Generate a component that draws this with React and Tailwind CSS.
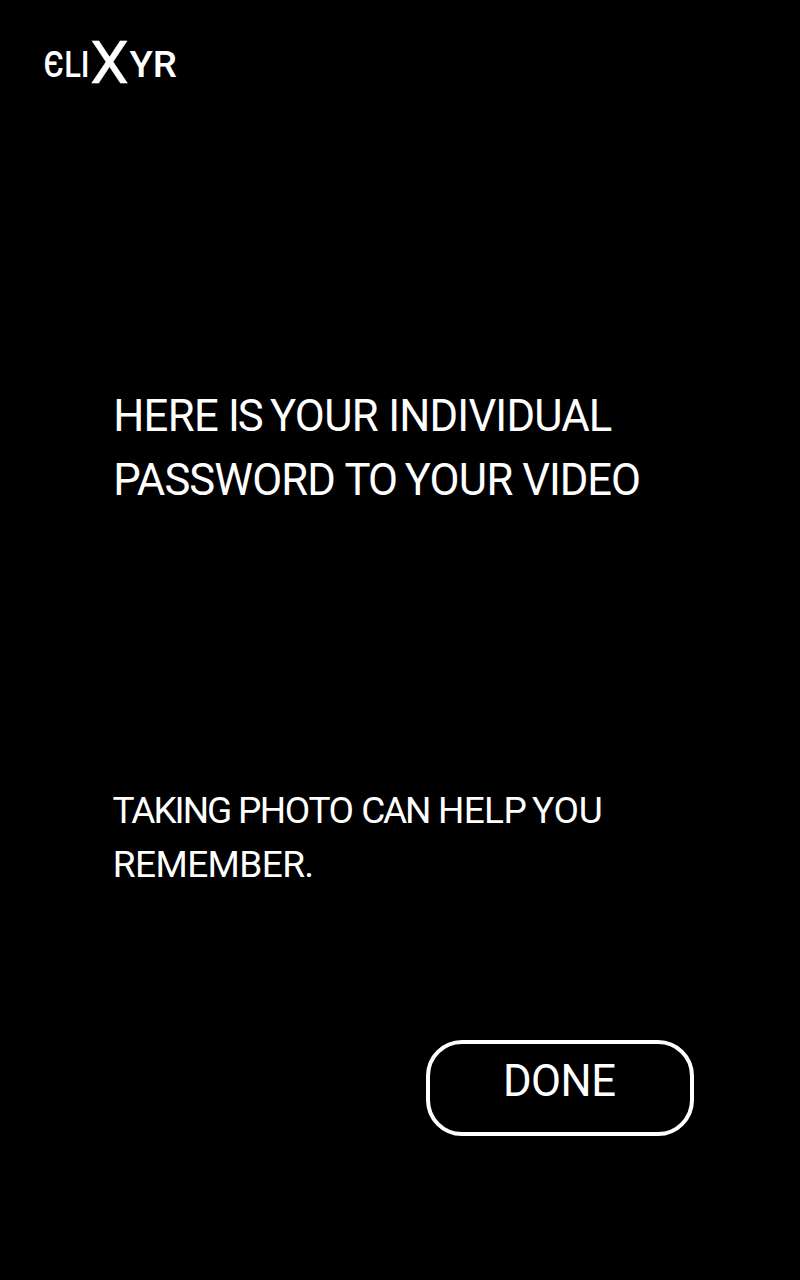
const Word = ({ className, children }) => (
  <span className={`inline-block shrink-0 whitespace-nowrap ${className}`}>{children}</span>
);

function Logo() {
  return (
    <svg
      className="block h-[94px] w-[160px]"
      viewBox="0 -20 160 94"
      fill="#fff"
      fontFamily="Roboto, sans-serif"
      fontWeight="500"
      fontSize="36"
      role="img"
      aria-label="ELIXYR"
    >
      <text x="8.6" y="47" textLength="46" lengthAdjust="spacingAndGlyphs">ЄLI</text>
      <text x="55" y="53" fontSize="60" fontWeight="400" stroke="#fff" strokeWidth="0.4" textLength="39" lengthAdjust="spacingAndGlyphs">X</text>
      <text x="94.4" y="47" textLength="47.5" lengthAdjust="spacingAndGlyphs">YR</text>
    </svg>
  );
}

export default function App() {
  return (
    <main className="flex h-[1280px] w-[800px] flex-col overflow-hidden bg-black font-['Roboto',sans-serif] text-white">
      <header className="h-[385px] pt-[10px] pl-[35px]">
        <Logo />
      </header>

      <h1 className="h-[397px] text-[43.6px] leading-[64px] font-normal">
        <span className="flex pl-[113.2px]">
          <Word className="w-[114.8px] tracking-[-0.67px]">HERE</Word>
          <Word className="w-[42px] tracking-[-2px]">IS</Word>
          <Word className="w-[118.2px] tracking-[-0.7px]">YOUR</Word>
          <Word className="tracking-[-0.8px]">INDIVIDUAL</Word>
        </span>
        <span className="flex pl-[113.2px]">
          <Word className="w-[231.3px] tracking-[-0.9px]">PASSWORD</Word>
          <Word className="w-[60.2px] tracking-[-2px]">TO</Word>
          <Word className="w-[117.7px] tracking-[-0.7px]">YOUR</Word>
          <Word className="tracking-[-1.1px]">VIDEO</Word>
        </span>
      </h1>

      <p className="h-[258px] pt-[2px] text-[37px] leading-[54px]">
        <span className="flex pl-[112.6px]">
          <Word className="w-[125.3px] tracking-[-2px]">TAKING</Word>
          <Word className="w-[123.3px] tracking-[-1.4px]">PHOTO</Word>
          <Word className="w-[76.7px] tracking-[-2.2px]">CAN</Word>
          <Word className="w-[94.2px] tracking-[-0.6px]">HELP</Word>
          <Word className="tracking-[-0.2px]">YOU</Word>
        </span>
        <span className="flex pl-[112.8px]">
          <Word className="tracking-[-0.6px]">REMEMBER.</Word>
        </span>
      </p>

      <button className="ml-[426px] flex h-[96px] w-[268px] items-start rounded-[36px] border-4 border-white pt-[6px] pl-[73px] text-[43.6px] leading-[64px] tracking-[-0.5px]">
        DONE
      </button>
    </main>
  );
}
